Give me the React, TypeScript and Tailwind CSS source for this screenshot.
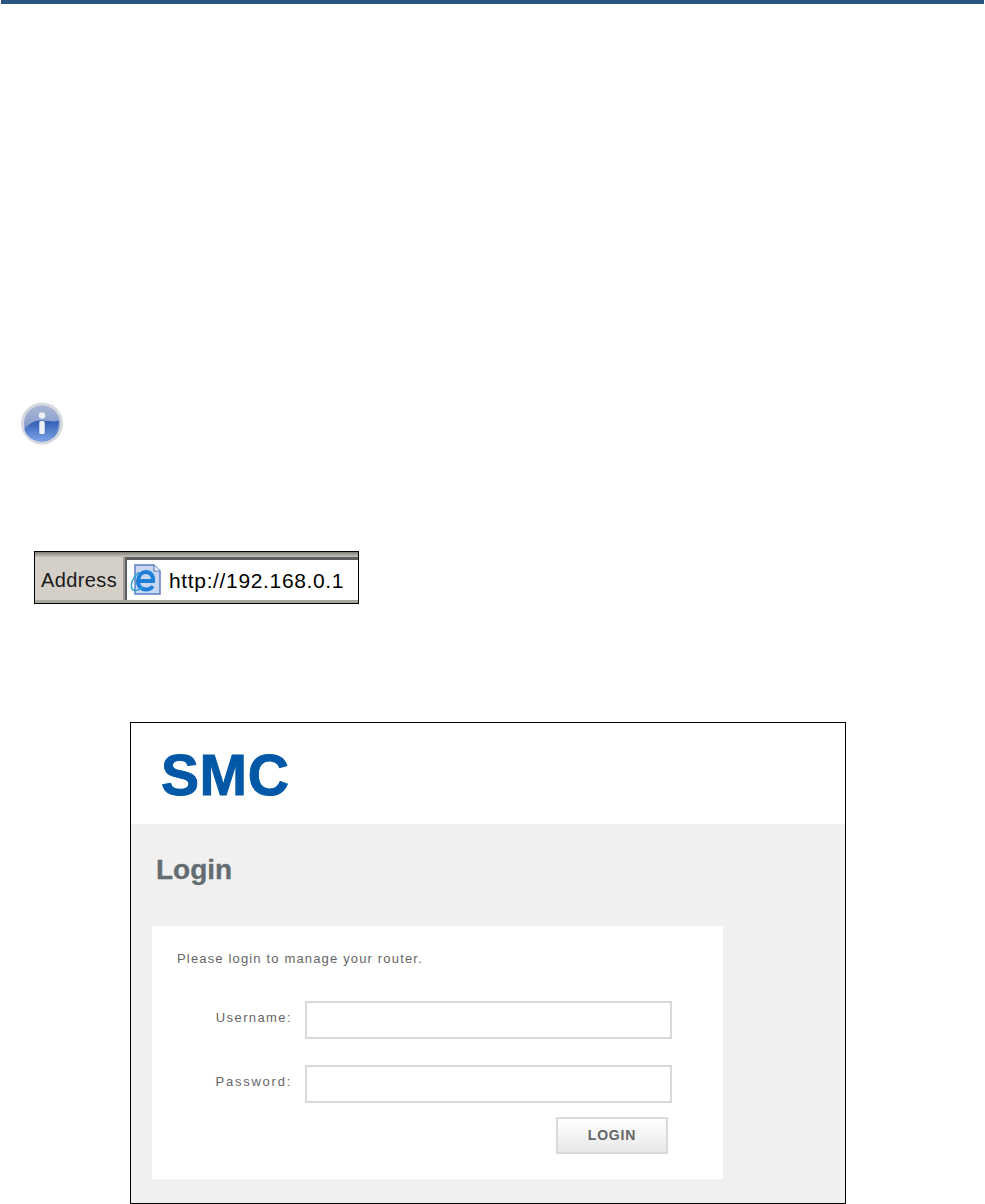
export default function App() {
  return (
    <div className="relative w-[985px] h-[1204px] overflow-hidden bg-white font-['Liberation_Sans',Arial,sans-serif]">
      <div className="ml-px w-[983px] h-[4px] bg-[#2a5580]" />

      <div className="ml-[20px] mt-[398px] w-[44px] h-[43px]">
        <svg viewBox="0 0 43 43" width="44" height="43">
          <defs>
            <linearGradient id="top" x1="0" y1="0" x2="0" y2="1">
              <stop offset="0" stopColor="#aab6d2" />
              <stop offset="0.55" stopColor="#8a9fd0" />
              <stop offset="1" stopColor="#3f6cc4" />
            </linearGradient>
            <linearGradient id="low" x1="0" y1="0" x2="0" y2="1">
              <stop offset="0" stopColor="#2e5cb4" />
              <stop offset="1" stopColor="#7ea4e8" />
            </linearGradient>
          </defs>
          <circle cx="21.500" cy="21.500" r="21" fill="#d5d9df" />
          <circle cx="21.500" cy="21.500" r="18" fill="url(#top)" />
          <path d="M3.800 27C9 21 14 18.500 21 18.500c7 0 12 2 17 0 1 10-6 21-16.500 21C12 39.500 5.500 34 3.800 27z" fill="url(#low)" />
          <circle cx="21.500" cy="13.500" r="3.200" fill="#eef1f8" />
          <rect x="18.800" y="19" width="5.400" height="13" rx="1.500" fill="#eef1f8" />
        </svg>
      </div>

      <div className="ml-[34px] mt-[106px] w-[325px] h-[53px] border border-black flex flex-col bg-[#d4d0c8]">
        <div className="h-[5px] bg-gradient-to-b from-[#7d7d78] to-[#c9c6be]" />
        <div className="flex-1 flex items-stretch min-h-0">
          <div className="w-[90px] flex items-center pl-[6px] pt-[2px] text-[20px] leading-none tracking-[0.4px] text-[#1a1a1a] border-r-2 border-[#a09d95]">
            Address
          </div>
          <div className="flex-1 bg-white border-t-[3px] border-l-2 border-[#5d5d5d] flex items-center pl-[3px] gap-[7px]">
            <svg viewBox="0 0 32 32" width="32" height="32" className="shrink-0 -mt-px">
              <path d="M5 1h19l6 6v23H5z" fill="#c9d6f0" stroke="#5c7fc2" strokeWidth="1.500" />
              <path d="M24 1v6h6" fill="#eef2fb" stroke="#5c7fc2" strokeWidth="1.200" />
              <path d="M23 17H8c.5-6 4-9 8-9 4.500 0 7.500 3.500 7 9z" fill="none" stroke="#1f7fd8" strokeWidth="4" />
              <path d="M8 17c0 5.500 3.500 8.500 8 8.500 3 0 5.500-1.200 6.500-3.500" fill="none" stroke="#1f7fd8" strokeWidth="4" />
              <path d="M9 8C3 13 0 20 2 25c2 3 7 1 11-2" fill="none" stroke="#2aa0d8" strokeWidth="1.500" />
            </svg>
            <span className="text-[21px] leading-none tracking-[0.65px] text-black">http://192.168.0.1</span>
          </div>
        </div>
        <div className="h-[3px] bg-[#a9a69e]" />
      </div>

      <div className="ml-[130px] mt-[118px] w-[716px] h-[482px] border border-black bg-white flex flex-col">
        <div className="h-[101px] pl-[30px] pt-[20px] text-[57px] leading-[64px] font-bold text-[#0058a6] tracking-[0.6px] [-webkit-text-stroke:1px_#0058a6]">
          SMC
        </div>
        <div className="flex-1 bg-[#f0f0f0] pl-[21px] flex flex-col">
          <h1 className="pl-[4px] pt-[28px] h-[102px] text-[28px] leading-[36px] font-bold text-[#636c71] [-webkit-text-stroke:0.3px_#636c71]">Login</h1>
          <div className="w-[571px] h-[253px] bg-white flex flex-col">
            <p className="pl-[25px] pt-[26px] h-[75px] text-[13px] leading-[14px] tracking-[1.16px] text-[#666]">
              Please login to manage your router.
            </p>
            <div className="flex items-center h-[38px]">
              <label className="w-[140px] pb-[4px] text-right text-[13px] tracking-[1.4px] text-[#666]">Username:</label>
              <input aria-label="Username" className="ml-[13px] w-[367px] h-[38px] border-2 border-[#d9d9d9] bg-white" />
            </div>
            <div className="flex items-center h-[38px] mt-[26px]">
              <label className="w-[140px] pb-[4px] text-right text-[13px] tracking-[1.75px] text-[#666]">Password:</label>
              <input aria-label="Password" className="ml-[13px] w-[367px] h-[38px] border-2 border-[#d9d9d9] bg-white" />
            </div>
            <div className="flex mt-[14px] pl-[404px]">
              <button className="w-[112px] h-[37px] border-2 border-[#d9d9d9] bg-gradient-to-b from-white to-[#e8e8e8] text-[14px] font-bold tracking-[0.8px] text-[#666]">
                LOGIN
              </button>
            </div>
          </div>
        </div>
      </div>
    </div>
  );
}
